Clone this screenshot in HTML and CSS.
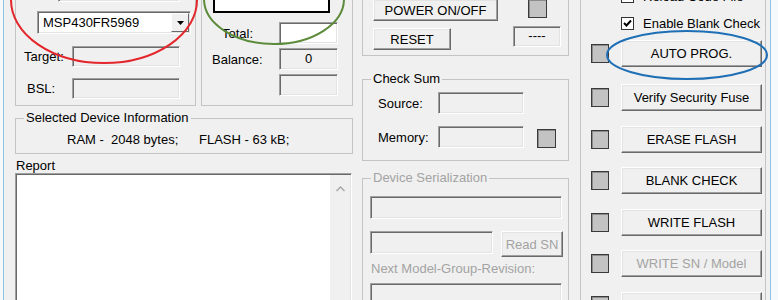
FILE: index.html
```html
<!DOCTYPE html>
<html lang="en">
<head>
<meta charset="UTF-8">
<title>MSP430 Programmer</title>
<link rel="stylesheet" href="styles.css">
</head>
<body>

<div class="window">

    <!-- left column: device, counter, info, report -->
    <div class="col col-a">
        <div class="top-row">
            <div class="group group-device">
                <div class="field field-top"></div>
                <div class="combo">
                    <span class="combo-text">MSP430FR5969</span>
                    <span class="combo-btn">
                        <svg width="7" height="4" viewBox="0 0 7 4"><polygon points="0,0 7,0 3.5,4" fill="#000"/></svg>
                    </span>
                </div>
                <div class="row row-target">
                    <span class="label">Target:</span>
                    <div class="field field-conn"></div>
                </div>
                <div class="row row-bsl">
                    <span class="label">BSL:</span>
                    <div class="field field-conn"></div>
                </div>
            </div>

            <div class="group group-count">
                <div class="counter-box"></div>
                <div class="row row-count row-total">
                    <span class="label">Total:</span>
                    <div class="field field-white field-num"></div>
                </div>
                <div class="row row-count row-balance">
                    <span class="label">Balance:</span>
                    <div class="field field-num">0</div>
                </div>
                <div class="row row-count">
                    <div class="field field-num"></div>
                </div>
            </div>
        </div>

        <fieldset class="frame frame-info">
            <legend>Selected Device Information</legend>
            <div class="info-line"><span class="info-ram">RAM -  2048 bytes;</span><span>FLASH - 63 kB;</span></div>
        </fieldset>

        <div class="report-label">Report</div>
        <div class="report">
            <div class="scrollbar">
                <svg width="9" height="6" viewBox="0 0 9 6"><polyline points="0.5,5 4.5,1 8.5,5" fill="none" stroke="#a6a6a6" stroke-width="1.4"/></svg>
            </div>
        </div>
    </div>

    <!-- middle column: power, checksum, serialization -->
    <div class="col col-b">
        <div class="group group-power">
            <div class="power-row">
                <button class="btn btn-power">POWER ON/OFF</button>
                <div class="led led-power"></div>
            </div>
            <div class="power-row">
                <button class="btn btn-reset">RESET</button>
                <div class="field field-status">----</div>
            </div>
        </div>

        <fieldset class="frame frame-sum">
            <legend>Check Sum</legend>
            <div class="row row-sum row-source">
                <span class="label">Source:</span>
                <div class="field field-sum"></div>
            </div>
            <div class="row row-sum row-memory">
                <span class="label">Memory:</span>
                <div class="field field-sum"></div>
                <div class="led led-sum"></div>
            </div>
        </fieldset>

        <fieldset class="frame frame-serial">
            <legend>Device Serialization</legend>
            <div class="field field-serial"></div>
            <div class="serial-row">
                <div class="field field-sn"></div>
                <button class="btn btn-readsn" disabled>Read SN</button>
            </div>
            <div class="serial-label">Next Model-Group-Revision:</div>
            <div class="field field-serial field-next"></div>
        </fieldset>
    </div>

    <!-- right column: options and actions -->
    <div class="col col-c">
        <div class="group group-actions">
            <div class="check-row check-reload">
                <span class="checkbox"></span>
                <span>Reload Code File</span>
            </div>
            <div class="check-row check-blank">
                <span class="checkbox">
                    <svg width="11" height="11" viewBox="0 0 11 11"><polyline points="2,5 4.5,7.5 9,2.5" fill="none" stroke="#000" stroke-width="2"/></svg>
                </span>
                <span>Enable Blank Check</span>
            </div>
            <div class="actions">
                <div class="action action-auto"><div class="led"></div><button class="btn btn-action">AUTO PROG.</button></div>
                <div class="action"><div class="led"></div><button class="btn btn-action">Verify Security Fuse</button></div>
                <div class="action"><div class="led"></div><button class="btn btn-action">ERASE FLASH</button></div>
                <div class="action"><div class="led"></div><button class="btn btn-action">BLANK CHECK</button></div>
                <div class="action"><div class="led"></div><button class="btn btn-action">WRITE FLASH</button></div>
                <div class="action"><div class="led"></div><button class="btn btn-action" disabled>WRITE SN / Model</button></div>
                <div class="action"><div class="led"></div><button class="btn btn-action">VERIFY FLASH</button></div>
            </div>
        </div>
    </div>
</div>

<!-- hand drawn annotation marks over the dialog -->
<svg class="marks" width="778" height="300" viewBox="0 0 778 300">
    <ellipse cx="104" cy="0" rx="93" ry="63" fill="none" stroke="#e3262b" stroke-width="2"/>
    <ellipse cx="274" cy="-1" rx="70" ry="45" fill="none" stroke="#5d8b3c" stroke-width="2"/>
    <ellipse cx="687" cy="55" rx="80" ry="24" fill="none" stroke="#1f6fb6" stroke-width="2"/>
</svg>

</body>
</html>
```

FILE: styles.css
```css
body {
    margin: 0;
    height: 300px;
    overflow: hidden;
    background-color: #f5f9fc;
    font-family: "Liberation Sans", Arial, sans-serif;
    font-size: 13px;
    line-height: 15px;
    color: #000;
}

.window {
    display: flex;
    align-items: flex-start;
    width: 768px;
    height: 380px;
    margin: -30px 0 0 3px;
    padding-left: 11px;
    box-sizing: border-box;
    background-color: #f0f0f0;
    border-left: 1px solid #8fc3e3;
    border-right: 1px solid #8fc3e3;
}

.col {
    display: flex;
    flex-direction: column;
    flex: none;
}

.col-a { width: 338px; }
.col-b { width: 207px; margin-left: 9px; }
.col-c { width: 186px; margin-left: 11px; }

.top-row {
    display: flex;
    align-items: flex-start;
}

/* plain group boxes (their captions are above the visible area) */
.group {
    display: flex;
    flex-direction: column;
    box-sizing: border-box;
    border: 1px solid #c4c4c4;
    flex: none;
}

.frame {
    display: flex;
    flex-direction: column;
    margin: 0;
    padding: 0;
    min-width: 0;
    box-sizing: border-box;
    border: 1px solid #c4c4c4;
}

.frame legend {
    margin-left: 8px;
    padding: 0 2px;
    line-height: 14px;
}

/* sunken edit fields */
.field {
    box-sizing: border-box;
    background-color: #f0f0f0;
    border: 1px solid;
    border-color: #a0a0a0 #fff #fff #a0a0a0;
    box-shadow: inset 1px 1px 0 #696969, inset -1px -1px 0 #e3e3e3;
    flex: none;
}

.field-white { background-color: #fff; }

/* raised push buttons */
.btn {
    box-sizing: border-box;
    margin: 0;
    padding: 0;
    font-family: inherit;
    font-size: 13px;
    color: #000;
    background-color: #f0f0f0;
    border: 1px solid;
    border-color: #fff #696969 #696969 #fff;
    box-shadow: inset -1px -1px 0 #a0a0a0, inset 1px 1px 0 #e3e3e3;
    flex: none;
}

.btn:disabled { color: #a3a3a3; }

.led {
    box-sizing: border-box;
    width: 19px;
    height: 19px;
    background-color: #c3c3c3;
    border: 1px solid #3a3a3a;
    box-shadow: inset 1px 1px 0 #8c8c8c;
    flex: none;
}

.row {
    display: flex;
    align-items: center;
}

/* device group */
.group-device { width: 181px; height: 136px; }

.field-top {
    width: 122px;
    height: 24px;
    margin: 7px 0 0 42px;
}

.combo {
    display: flex;
    align-items: center;
    width: 154px;
    height: 23px;
    margin: 9px 0 0 21px;
    box-sizing: border-box;
    background-color: #fff;
    border: 1px solid;
    border-color: #a0a0a0 #fff #fff #a0a0a0;
    box-shadow: inset 1px 1px 0 #696969, inset -1px -1px 0 #e3e3e3;
}

.combo-text {
    flex: 1;
    padding-left: 5px;
}

.combo-btn {
    display: flex;
    align-items: center;
    justify-content: center;
    width: 18px;
    height: 19px;
    margin-right: 1px;
    box-sizing: border-box;
    background-color: #f0f0f0;
    border: 1px solid;
    border-color: #fff #696969 #696969 #fff;
}

.row-target { height: 21px; margin-top: 12px; }
.row-bsl { height: 21px; margin-top: 11px; }

.row-target .label,
.row-bsl .label {
    width: 48px;
    margin-left: 8px;
}

.row-bsl .label { padding-left: 3px; box-sizing: border-box; }

.field-conn { width: 108px; height: 21px; }

/* counter group */
.group-count { width: 152px; height: 136px; margin-left: 5px; }

.counter-box {
    width: 117px;
    height: 37px;
    margin: 5px 0 0 11px;
    box-sizing: border-box;
    background-color: #fff;
    border: 2px solid #000;
}

.row-count { height: 22px; margin-top: 4px; }
.row-total { margin-top: 9px; }
.row-total .label { margin-left: 20px; }
.row-balance .label { margin-left: 10px; }

.field-num {
    width: 59px;
    height: 22px;
    margin: 0 14px 0 auto;
    text-align: center;
    line-height: 20px;
}

/* selected device information */
.frame-info { height: 43px; margin-top: 5px; }

.info-line {
    margin: 7px 0 0 51px;
    white-space: pre;
}

.info-ram {
    display: inline-block;
    width: 132px;
}

.report-label { margin: 4px 0 0 1px; }

.report {
    display: flex;
    justify-content: flex-end;
    width: 337px;
    height: 140px;
    box-sizing: border-box;
    background-color: #fff;
    border: 1px solid;
    border-color: #a0a0a0 #fff #fff #a0a0a0;
    box-shadow: inset 1px 1px 0 #696969, inset -1px -1px 0 #e3e3e3;
}

.scrollbar {
    display: flex;
    justify-content: center;
    width: 20px;
    margin: 1px 1px 1px 0;
    padding-top: 11px;
    box-sizing: border-box;
    background-color: #f0f0f0;
}

/* power group */
.group-power { height: 86px; }

.power-row {
    display: flex;
    align-items: flex-start;
}

.power-row:first-child { margin-top: 28px; }
.power-row + .power-row { margin-top: 5px; }

.btn-power { width: 125px; height: 22px; margin-left: 10px; }
.led-power { margin-left: 30px; }

.btn-reset { width: 78px; height: 22px; margin: 2px 0 0 10px; }

.field-status {
    width: 48px;
    height: 21px;
    margin-left: 62px;
    text-align: center;
    line-height: 18px;
}

/* check sum */
.frame-sum { height: 89px; margin-top: 16px; }

.row-sum { height: 22px; align-items: center; }
.row-source { margin-top: 6px; }
.row-memory { margin-top: 12px; }

.row-sum .label { width: 60px; margin-left: 15px; }

.field-sum { width: 86px; height: 22px; }

.led-sum { margin-left: 13px; align-self: flex-end; }

/* serialization (disabled) */
.frame-serial { height: 160px; margin-top: 10px; color: #a3a3a3; }

.field-serial {
    width: 192px;
    height: 23px;
    margin: 11px 0 0 7px;
}

.serial-row {
    display: flex;
    align-items: flex-start;
    margin: 12px 0 0 7px;
}

.field-sn { width: 123px; height: 23px; }

.btn-readsn { width: 62px; height: 26px; margin-left: 8px; }

.serial-label { margin: 4px 0 0 8px; }

.field-next { margin-top: 7px; }

/* right column */
.group-actions { height: 380px; }

.check-row {
    display: flex;
    align-items: center;
    height: 15px;
}

.check-reload { margin-top: 18px; }
.check-blank { margin-top: 12px; }

.checkbox {
    display: flex;
    align-items: center;
    justify-content: center;
    width: 13px;
    height: 13px;
    margin: 0 9px 0 40px;
    box-sizing: border-box;
    background-color: #fff;
    border: 1px solid #333;
    flex: none;
}

.actions {
    display: flex;
    flex-direction: column;
    gap: 14.5px;
    margin-top: 9px;
}

.action {
    display: flex;
    align-items: center;
    height: 27px;
}

.action-auto { margin-bottom: 2.5px; }

.action .led { width: 18px; margin-left: 10px; }

.btn-action { width: 141px; height: 27px; margin-left: 12px; }

.marks {
    position: absolute;
    top: 0;
    left: 0;
    pointer-events: none;
}
```
